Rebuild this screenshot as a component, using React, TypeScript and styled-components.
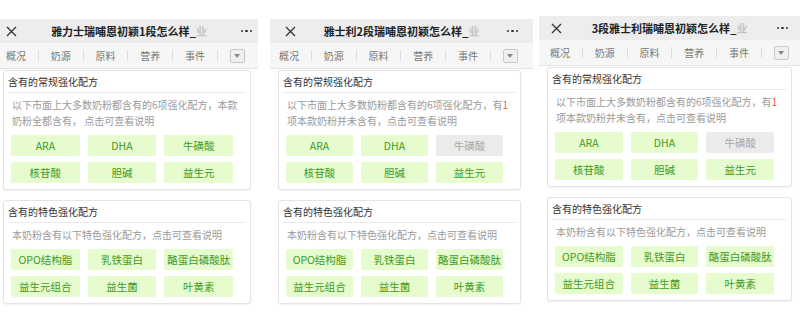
import React from 'react'
import styled, { createGlobalStyle } from 'styled-components'

const GlobalStyle = createGlobalStyle`
  html, body {
    margin: 0;
    padding: 0;
    background: #fff;
  }
  body {
    font-family: "Noto Sans CJK SC", "Noto Sans", sans-serif;
  }
`

const Page = styled.div`
  display: flex;
  width: 800px;
  height: 321px;
  overflow: hidden;
  background: #fff;
`

const Phone = styled.div<{ $w: number; $top: number; $ml: number }>`
  flex-shrink: 0;
  width: ${p => p.$w}px;
  margin-left: ${p => p.$ml}px;
  padding-top: ${p => p.$top}px;
  overflow: hidden;
`

const Header = styled.div<{ $edge: number }>`
  display: grid;
  grid-template-columns: 40px 1fr 40px;
  align-items: center;
  height: 24px;
  background: #ededed;
  & > :first-child { padding-left: ${p => p.$edge}px; }
  & > :last-child { padding-right: ${p => p.$edge}px; }
`

const Close = styled.div`
  display: flex;
  align-items: center;
`

const Title = styled.div`
  font-size: 11px;
  font-weight: 700;
  color: #222;
  text-align: center;
  white-space: nowrap;
  overflow: hidden;
`

const Fade = styled.span`
  color: #c4c4c4;
`

const More = styled.div`
  display: flex;
  justify-content: flex-end;
  gap: 2px;
`

const Dot = styled.span`
  width: 2.5px;
  height: 2.5px;
  border-radius: 50%;
  background: #333;
`

const TabBar = styled.div`
  display: flex;
  align-items: center;
  height: 25px;
  background: #f6f6f6;
  border-bottom: 1px solid #e3e3e3;
`

const TabList = styled.div<{ $shift: number }>`
  display: flex;
  margin-left: ${p => p.$shift}px;
`

const Tab = styled.div`
  box-sizing: border-box;
  width: 44.8px;
  height: 11px;
  line-height: 11px;
  font-size: 10px;
  color: #777;
  text-align: center;
  border-right: 1px solid #dcdcdc;
`

const DropBtn = styled.div`
  box-sizing: border-box;
  display: flex;
  align-items: center;
  justify-content: center;
  width: 15px;
  height: 14px;
  margin-left: 12px;
  border: 1px solid #c9c9c9;
  border-radius: 2px;
  background: #f0f0f0;
`

const Caret = styled.span`
  width: 0;
  height: 0;
  border-left: 3.5px solid transparent;
  border-right: 3.5px solid transparent;
  border-top: 4px solid #888;
`

const Cards = styled.div<{ $inset: number; $cardW: number }>`
  display: flex;
  flex-direction: column;
  gap: 10px;
  margin-top: 1px;
  margin-left: ${p => p.$inset}px;
  width: ${p => p.$cardW}px;
`

const Card = styled.div`
  background: #fff;
  border: 1px solid #e4e4e4;
  border-radius: 3px;
  box-shadow: 0 1px 2px rgba(0, 0, 0, 0.06);
`

const CardTitle = styled.div`
  margin: 0 4px;
  height: 21px;
  line-height: 21px;
  font-size: 10px;
  color: #333;
  border-bottom: 1px solid #ebebeb;
`

const Desc = styled.div`
  padding: 4px 9px 6px 8px;
  font-size: 10px;
  line-height: 16px;
  color: #9a9a9a;
`

const Hot = styled.span`
  color: #f2561d;
`

const ChipGrid = styled.div`
  display: grid;
  grid-template-columns: repeat(3, 1fr);
  gap: 6px 8px;
  padding: 0 17px 6px 7px;
`

const Chip = styled.div<{ $off?: boolean }>`
  height: 21px;
  line-height: 21px;
  border-radius: 2px;
  text-align: center;
  font-size: 10.5px;
  white-space: nowrap;
  background: ${p => (p.$off ? '#ebebeb' : '#e6fbce')};
  color: ${p => (p.$off ? '#a8a8a8' : '#3d9a22')};
`

const tabs = ['概况', '奶源', '原料', '营养', '事件']
const special = ['OPO结构脂', '乳铁蛋白', '酪蛋白磷酸肽', '益生元组合', '益生菌', '叶黄素']

type PhoneProps = {
  title: string
  w: number
  top: number
  ml: number
  edge: number
  shift: number
  inset: number
  cardW: number
  missing: boolean
}

const Screen = (p: PhoneProps) => (
  <Phone $w={p.w} $top={p.top} $ml={p.ml}>
    <Header $edge={p.edge}>
      <Close>
        <svg width="11" height="11" viewBox="0 0 11 11">
          <path d="M1 1L10 10M10 1L1 10" stroke="#333" strokeWidth="1.3" />
        </svg>
      </Close>
      <Title>
        {p.title}_<Fade>业</Fade>
      </Title>
      <More>
        <Dot />
        <Dot />
        <Dot />
      </More>
    </Header>
    <TabBar>
      <TabList $shift={p.shift}>
        {tabs.map(t => (
          <Tab key={t}>{t}</Tab>
        ))}
      </TabList>
      <DropBtn>
        <Caret />
      </DropBtn>
    </TabBar>
    <Cards $inset={p.inset} $cardW={p.cardW}>
      <Card>
        <CardTitle>含有的常规强化配方</CardTitle>
        {p.missing ? (
          <Desc>
            以下市面上大多数奶粉都含有的6项强化配方，有<Hot>1</Hot>项本款奶粉并未含有，点击可查看说明
          </Desc>
        ) : (
          <Desc>以下市面上大多数奶粉都含有的6项强化配方，本款奶粉全都含有， 点击可查看说明</Desc>
        )}
        <ChipGrid>
          <Chip>ARA</Chip>
          <Chip>DHA</Chip>
          <Chip $off={p.missing}>牛磺酸</Chip>
          <Chip>核苷酸</Chip>
          <Chip>胆碱</Chip>
          <Chip>益生元</Chip>
        </ChipGrid>
      </Card>
      <Card>
        <CardTitle>含有的特色强化配方</CardTitle>
        <Desc>本奶粉含有以下特色强化配方，点击可查看说明</Desc>
        <ChipGrid>
          {special.map(s => (
            <Chip key={s}>{s}</Chip>
          ))}
        </ChipGrid>
      </Card>
    </Cards>
  </Phone>
)

export default function App() {
  return (
    <>
      <GlobalStyle />
      <Page>
        <Screen title="雅力士瑞哺恩初颖1段怎么样" w={258} top={19} ml={0} edge={6} shift={-6} inset={3} cardW={248} missing={false} />
        <Screen title="雅士利2段瑞哺恩初颖怎么样" w={263} top={19} ml={12} edge={15} shift={-3} inset={8} cardW={243} missing />
        <Screen title="3段雅士利瑞哺恩初颖怎么样" w={261} top={16} ml={6} edge={12} shift={-1} inset={8} cardW={245} missing />
      </Page>
    </>
  )
}
